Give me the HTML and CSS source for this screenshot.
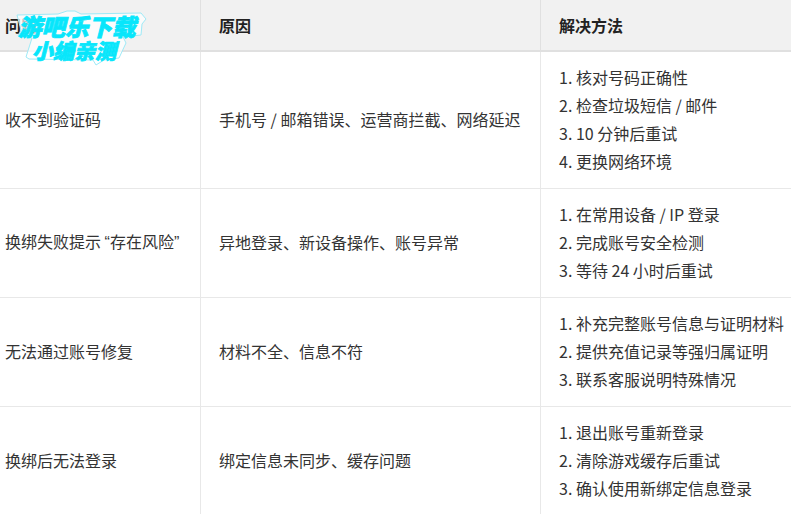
FILE: index.html
```html
<!DOCTYPE html>
<html lang="zh-CN">
<head>
<meta charset="utf-8">
<title>换绑问题</title>
<link rel="stylesheet" href="styles.css">
</head>
<body>
<table class="faq">
<thead>
<tr class="head"><th class="c1">问题</th><th class="c2">原因</th><th class="c3">解决方法</th></tr>
</thead>
<tbody>
<tr><td>收不到验证码</td><td>手机号 / 邮箱错误、运营商拦截、网络延迟</td><td><div>1. 核对号码正确性</div><div>2. 检查垃圾短信 / 邮件</div><div>3. 10 分钟后重试</div><div>4. 更换网络环境</div></td></tr>
<tr><td class="nowrap">换绑失败提示 <span class="quote">“</span>存在风险<span class="quote">”</span></td><td>异地登录、新设备操作、账号异常</td><td><div>1. 在常用设备 / IP 登录</div><div>2. 完成账号安全检测</div><div>3. 等待 24 小时后重试</div></td></tr>
<tr><td>无法通过账号修复</td><td>材料不全、信息不符</td><td><div>1. 补充完整账号信息与证明材料</div><div>2. 提供充值记录等强归属证明</div><div>3. 联系客服说明特殊情况</div></td></tr>
<tr><td>换绑后无法登录</td><td>绑定信息未同步、缓存问题</td><td><div>1. 退出账号重新登录</div><div>2. 清除游戏缓存后重试</div><div>3. 确认使用新绑定信息登录</div></td></tr>
</tbody>
</table>
<div class="badge">
<svg class="badge-bg" width="140" height="56" viewBox="0 0 140 56"><path d="M6 5 L47 4 L56 1 L64 1 L70 4 L130 3 L135 9 L131 14 L130 25 L112 27 L115 33 L108 48 L93 50 L85 55 L82 50 L18 49 L15 47 L21 28 L7 26 L10 20 Z" fill="rgba(255,255,255,0.7)" stroke="#9eeaf7" stroke-width="1"/></svg>
<div class="badge-line one">游吧乐下载</div>
<div class="badge-line two">小编亲测</div>
</div>
</body>
</html>
```
FILE: styles.css
```css
html, body {
  margin: 0;
  padding: 0;
  height: 514px;
  overflow: hidden;
  background: #fff;
}
body {
  position: relative;
  font-family: "Noto Sans CJK SC", "Liberation Sans", sans-serif;
  font-size: 16px;
  line-height: 28px;
  color: #333;
}
.faq {
  border-collapse: collapse;
  table-layout: fixed;
  width: 817px;
  margin-left: -14px;
  margin-top: -12px;
}
.faq th, .faq td {
  border: 1px solid #e8e8e8;
  padding: 11px 18px 13px;
  text-align: left;
  font-weight: 400;
}
.faq th {
  background: #f1f1f1;
  font-weight: 700;
  color: #222;
  padding: 22px 18px 11px;
  border-bottom: 2px solid #e0e0e0;
  border-right-color: #e0e0e0;
}
.nowrap { white-space: nowrap; }
.quote { font-family: "Liberation Sans", sans-serif; }
.c1 { width: 177px; }
.c2 { width: 303px; }
.badge {
  position: absolute;
  left: 11px;
  top: 10px;
  width: 140px;
  height: 56px;
}
.badge-bg { position: absolute; left: 0; top: 0; }
.badge-line {
  position: absolute;
  font-style: italic;
  font-weight: 900;
  color: #08e6fb;
  white-space: nowrap;
  -webkit-text-stroke: 0.8px #08e6fb;
}
.one { left: 7px; top: 3px; font-size: 23.5px; line-height: 26px; }
.two { left: 21px; top: 29px; font-size: 21px; line-height: 22px; }
```
